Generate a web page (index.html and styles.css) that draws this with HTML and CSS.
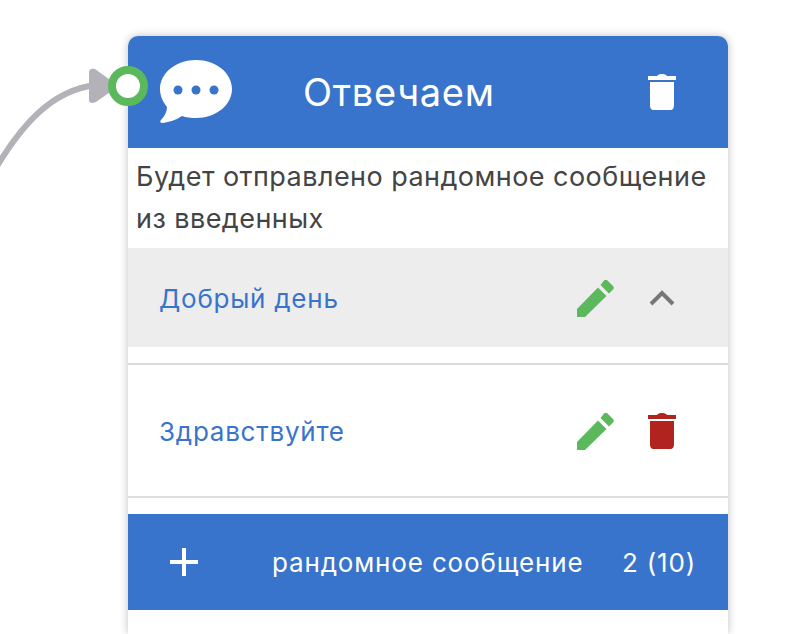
FILE: index.html
```html
<!DOCTYPE html>
<html lang="ru">
<head>
    <meta charset="UTF-8">
    <title>Отвечаем</title>
    <link rel="stylesheet" href="styles.css">
</head>
<body>
    <!-- incoming connection -->
    <svg class="link" width="130" height="140" viewBox="0 0 130 140">
        <path d="M-6 135C22 88 52 54 96 49" fill="none" stroke="#b3b2b9" stroke-width="6"/>
        <path d="M89 36C89 33 92 32 95 33L113 46C116 48 116 52 113 54L96 66C92 68 89 67 89 64Z" fill="#b3b2b9"/>
    </svg>

    <div class="node">
        <span class="port"></span>
        <div class="node-header">
            <svg class="bubble" width="72" height="63" viewBox="0 0 72 63">
                <path d="M36 0C56 0 72 13 72 29C72 45 56 58 36 58C31 58 26 57.500 22 56C16 60 9 62 3 63C0.500 63 -0.500 61.500 1 60C5 56 7 51 7 47C3 42 0 36 0 29C0 13 16 0 36 0Z" fill="#fff"/>
                <circle cx="18" cy="30" r="4.500" fill="#3874cb"/>
                <circle cx="36" cy="30" r="4.500" fill="#3874cb"/>
                <circle cx="54" cy="30" r="4.500" fill="#3874cb"/>
            </svg>
            <h1 class="node-title">Отвечаем</h1>
            <svg class="trash" width="28" height="36" viewBox="0 0 28 36">
                <path d="M0 2H9C10 0.500 12 0 14 0C16 0 18 0.500 19 2H28V6H0Z M2 8H26V31C26 34 25 36 22 36H6C3 36 2 34 2 31Z" fill="#fff"/>
            </svg>
        </div>
        <p class="node-desc">Будет отправлено рандомное сообщение из введенных</p>

        <div class="row row-open">
            <a class="row-label">Добрый день</a>
            <svg class="pencil" width="37" height="37" viewBox="0 0 37 37">
                <path d="M27 0.500C28 -0.500 29.500 -0.500 30.500 0.500L36 6C37 7 37 8.500 36 9.500L32 13.500L23.500 5Z M21 7.500L29.500 16L8 37H0V29Z" fill="#5cb85c"/>
            </svg>
            <span class="row-action">
                <svg width="26" height="16" viewBox="0 0 26 16">
                    <path d="M2 14L13 3L24 14" fill="none" stroke="#777" stroke-width="4"/>
                </svg>
            </span>
        </div>
        <div class="row row-closed">
            <a class="row-label">Здравствуйте</a>
            <svg class="pencil" width="37" height="37" viewBox="0 0 37 37">
                <path d="M27 0.500C28 -0.500 29.500 -0.500 30.500 0.500L36 6C37 7 37 8.500 36 9.500L32 13.500L23.500 5Z M21 7.500L29.500 16L8 37H0V29Z" fill="#5cb85c"/>
            </svg>
            <span class="row-action">
                <svg width="28" height="36" viewBox="0 0 28 36">
                    <path d="M0 2H9C10 0.500 12 0 14 0C16 0 18 0.500 19 2H28V6H0Z M2 8H26V31C26 34 25 36 22 36H6C3 36 2 34 2 31Z" fill="#b0231f"/>
                </svg>
            </span>
        </div>

        <div class="node-footer">
            <svg class="plus" width="28" height="28" viewBox="0 0 28 28">
                <path d="M12 0H16V12H28V16H16V28H12V16H0V12H12Z" fill="#fff"/>
            </svg>
            <span class="footer-label">рандомное сообщение</span>
            <span class="footer-count">2 (10)</span>
        </div>
    </div>
</body>
</html>
```

FILE: styles.css
```css
body {
    margin: 0;
    height: 634px;
    overflow: hidden;
    background-color: #fff;
    font-family: Inter, Roboto, "Liberation Sans", sans-serif;
    position: relative;
}

.link {
    position: absolute;
    left: 0;
    top: 36px;
    overflow: hidden;
}

.node {
    position: absolute;
    left: 128px;
    top: 36px;
    width: 600px;
    height: 598px;
    background-color: #fff;
    border-radius: 10px 10px 0 0;
    box-shadow: 0 0 8px rgba(0, 0, 0, 0.25);
}

.port {
    position: absolute;
    left: -20px;
    top: 30px;
    width: 24px;
    height: 24px;
    border: 8px solid #5cb85c;
    border-radius: 50%;
    background-color: #fff;
}

.node-header {
    height: 112px;
    background-color: #3874cb;
    border-radius: 10px 10px 0 0;
    display: flex;
    align-items: center;
    color: white;
}

.bubble {
    margin-left: 32px;
    margin-top: -1px;
}

.node-title {
    margin: 0 0 0 71px;
    font-size: 38px;
    font-weight: 400;
    letter-spacing: 0.7px;
    width: 345px;
}

.trash {
    margin-top: 0;
}

.node-desc {
    margin: 0;
    height: 100px;
    padding: 8px 8px 0;
    box-sizing: border-box;
    font-size: 27px;
    letter-spacing: 0.45px;
    line-height: 42px;
    color: #444;
}

.row {
    display: flex;
    align-items: center;
    padding-left: 31px;
    border-bottom: 2px solid #ddd;
}

.row-open {
    height: 99px;
    background-color: #ededed;
    border-bottom: none;
    margin-bottom: 16px;
    box-shadow: 0 16px 0 #fff, 0 18px 0 #ddd;
}

.row-closed {
    height: 131px;
    margin-top: 18px;
    margin-bottom: 16px;
}

.row-label {
    flex: 1;
    font-size: 26px;
    letter-spacing: 0.75px;
    padding-top: 2px;
    color: #3874cb;
}

.pencil {
    margin-top: 2px;
}

.row-action {
    width: 96px;
    padding-right: 18px;
    display: flex;
    justify-content: center;
}

.node-footer {
    height: 96px;
    background-color: #3874cb;
    color: white;
    display: flex;
    align-items: center;
}

.plus {
    margin-left: 42px;
}

.footer-label {
    margin-left: 74px;
    width: 350px;
    font-size: 26px;
    letter-spacing: 0.84px;
}

.footer-count {
    font-size: 26px;
    letter-spacing: 0.8px;
}
```
